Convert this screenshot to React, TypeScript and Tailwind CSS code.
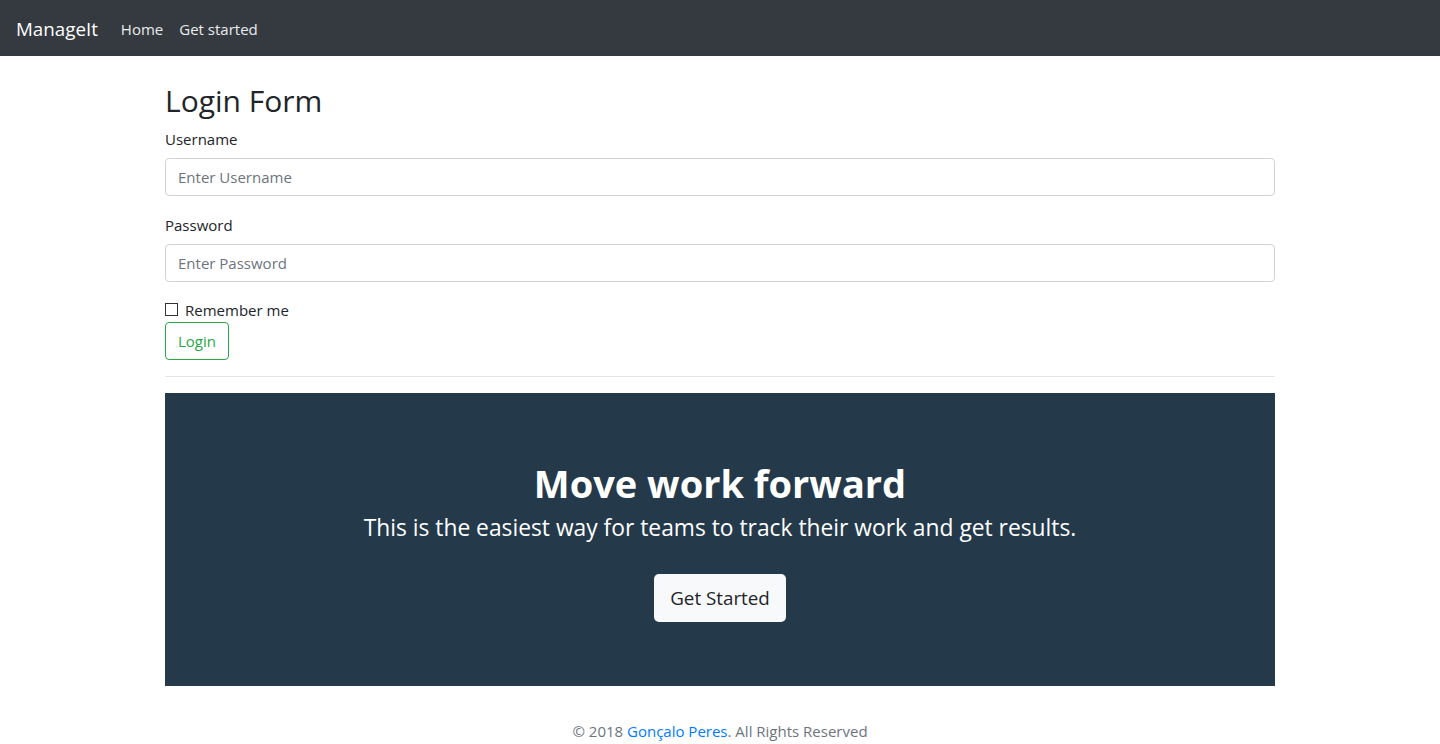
export default function App() {
  const font = { fontFamily: '"Open Sans", "Noto Sans", sans-serif' };
  return (
    <div className="min-h-[744px] bg-white text-[#212529]" style={font}>
      <nav className="h-14 bg-[#343a40] flex items-center px-4">
        <span className="text-white text-[18.75px] leading-[30px] mr-[23px] pt-[2px]">ManageIt</span>
        <a className="text-white/90 text-[15px] leading-6 mr-4 pt-[2px]">Home</a>
        <a className="text-white/90 text-[15px] leading-6 pt-[2px]">Get started</a>
      </nav>
      <div className="w-[1110px] mx-auto pt-6">
        <h2 className="text-[30px] leading-[38px] pt-[2px] mb-[6px] font-normal">Login Form</h2>
        <div className="mb-4">
          <label className="block text-[15px] leading-6 pt-[1px] mb-[7px]">Username</label>
          <div className="h-[38px] border border-[#ced4da] rounded-[4px] px-3 flex items-center text-[15px] text-[#6c757d]">Enter Username</div>
        </div>
        <div className="mb-4">
          <label className="block text-[15px] leading-6 pt-[1px] mb-[7px]">Password</label>
          <div className="h-[38px] border border-[#ced4da] rounded-[4px] px-3 flex items-center text-[15px] text-[#6c757d]">Enter Password</div>
        </div>
        <div className="flex items-center h-6 text-[15px]">
          <span className="w-[13px] h-[13px] border border-[#333] mr-[7px] -mt-[2px]"></span>
          <span className="pt-[1px]">Remember me</span>
        </div>
        <button className="h-[38px] px-3 border border-[#28a745] text-[#28a745] rounded-[4px] text-[15px]">Login</button>
        <div className="border-t border-black/10 mt-4 mb-4"></div>
        <div className="bg-[#243a4b] h-[293px] flex flex-col items-center pt-16 text-white">
          <h1 className="text-[38px] leading-[48px] pt-[2px] font-bold">Move work forward</h1>
          <p className="text-[22.8px] leading-[30px] mt-[6px]">This is the easiest way for teams to track their work and get results.</p>
          <button className="mt-[31px] h-12 px-4 bg-[#f8f9fa] text-[#212529] rounded-[5px] text-[18.8px]">Get Started</button>
        </div>
        <div className="pt-[33px] text-center text-[15px] leading-6 text-[#6c757d]">
          © 2018 <a className="text-[#007bff]">Gonçalo Peres</a>. All Rights Reserved
        </div>
      </div>
    </div>
  );
}
